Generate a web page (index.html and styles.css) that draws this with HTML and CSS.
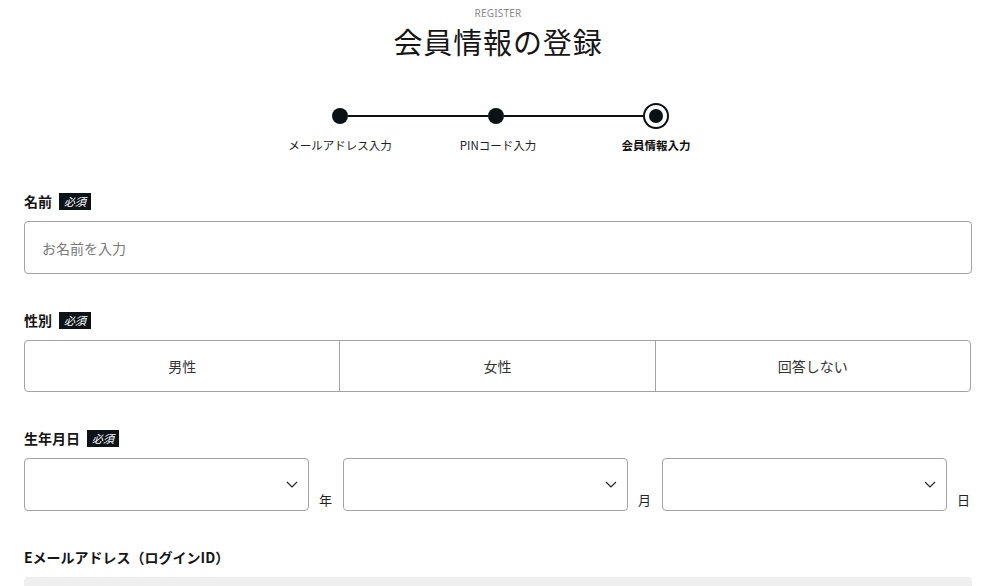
FILE: index.html
```html
<!DOCTYPE html>
<html lang="ja">
  <head>
    <meta charset="UTF-8">
    <meta name="viewport" content="width=device-width, initial-scale=1">
    <title>会員情報の登録</title>
    <link rel="stylesheet" href="styles.css">
  </head>
  <body>
    <main class="page">
      <header class="page-head">
        <p class="eyebrow">REGISTER</p>
        <h1 class="title">会員情報の登録</h1>
      </header>

      <div class="steps">
        <div class="track">
          <span class="dot"></span>
          <span class="line"></span>
          <span class="dot"></span>
          <span class="line"></span>
          <span class="ring"><span class="ring-core"></span></span>
        </div>
        <span class="step-label">メールアドレス入力</span>
        <span class="step-label">PINコード入力</span>
        <span class="step-label current">会員情報入力</span>
      </div>

      <form class="form">
        <div class="field">
          <label class="field-label">名前<span class="badge">必須</span></label>
          <input class="text-input" type="text" placeholder="お名前を入力">
        </div>

        <div class="field">
          <label class="field-label">性別<span class="badge">必須</span></label>
          <div class="segments">
            <span class="segment">男性</span>
            <span class="segment">女性</span>
            <span class="segment">回答しない</span>
          </div>
        </div>

        <div class="field">
          <label class="field-label">生年月日<span class="badge">必須</span></label>
          <div class="birth-row">
            <div class="select">
              <svg class="chevron" width="12" height="7" viewBox="0 0 12 7"><path d="M1 1l5 5 5-5" fill="none" stroke="#222" stroke-width="1.2"/></svg>
            </div>
            <span class="unit">年</span>
            <div class="select">
              <svg class="chevron" width="12" height="7" viewBox="0 0 12 7"><path d="M1 1l5 5 5-5" fill="none" stroke="#222" stroke-width="1.2"/></svg>
            </div>
            <span class="unit">月</span>
            <div class="select">
              <svg class="chevron" width="12" height="7" viewBox="0 0 12 7"><path d="M1 1l5 5 5-5" fill="none" stroke="#222" stroke-width="1.2"/></svg>
            </div>
            <span class="unit">日</span>
          </div>
        </div>

        <div class="field">
          <label class="field-label">Eメールアドレス（ログインID）</label>
          <div class="readonly-input"></div>
        </div>
      </form>
    </main>
  </body>
</html>
```

FILE: styles.css
```css
* {
  box-sizing: border-box;
}

body {
  margin: 0;
  background: #fff;
  color: #161616;
  font-family: "Noto Sans CJK JP", "Noto Sans", sans-serif;
}

.page {
  margin: 0 28px 0 24px;
}

.page-head {
  text-align: center;
  padding-top: 6px;
}

.eyebrow {
  margin: 0;
  font-family: "Noto Sans", sans-serif;
  font-size: 10px;
  line-height: 14px;
  color: #8a8a8a;
  letter-spacing: 0.02em;
}

.title {
  margin: 1px 0 0;
  font-size: 29px;
  line-height: 40px;
  font-weight: 400;
  letter-spacing: 0.03em;
}

.steps {
  display: grid;
  grid-template-columns: repeat(3, 158px);
  justify-content: center;
  margin-top: 42px;
  row-gap: 8px;
}

.track {
  grid-column: 1 / 4;
  display: flex;
  align-items: center;
  height: 26px;
  margin: 0 66px 0 71px;
}

.dot {
  width: 16px;
  height: 16px;
  border-radius: 50%;
  background: #0b1216;
  flex: none;
}

.line {
  flex: 1;
  height: 2px;
  background: #0b1216;
}

.ring {
  width: 26px;
  height: 26px;
  border: 2.5px solid #0b1216;
  border-radius: 50%;
  display: flex;
  align-items: center;
  justify-content: center;
  flex: none;
}

.ring-core {
  width: 14px;
  height: 14px;
  border-radius: 50%;
  background: #0b1216;
}

.step-label {
  text-align: center;
  font-size: 11.5px;
  line-height: 16px;
  color: #222;
}

.step-label.current {
  font-weight: 700;
  color: #111;
}

.form {
  margin-top: 38px;
}

.field {
  margin-bottom: 36px;
}

.field-label {
  display: flex;
  align-items: center;
  font-size: 14px;
  line-height: 20px;
  font-weight: 700;
  margin-bottom: 10px;
}

.badge {
  margin-left: 7px;
  background: #0d1418;
  color: #fff;
  font-size: 11px;
  line-height: 17px;
  padding: 0 5px;
  font-weight: 400;
  font-style: italic;
}

.text-input {
  display: block;
  width: 100%;
  height: 53px;
  border: 1px solid #a3a3a3;
  border-radius: 4px;
  padding: 0 17px;
  font-family: inherit;
  font-size: 14px;
  color: #222;
  outline: none;
}

.text-input::placeholder {
  color: #7a7a7a;
}

.segments {
  display: flex;
  height: 52px;
  border: 1px solid #a3a3a3;
  border-radius: 4px;
  margin-right: 1px;
}

.segment {
  flex: 1;
  display: flex;
  align-items: center;
  justify-content: center;
  font-size: 14px;
  color: #333;
}

.segment + .segment {
  border-left: 1px solid #a3a3a3;
}

.birth-row {
  display: flex;
  align-items: flex-end;
}

.select {
  flex: none;
  width: 285px;
  height: 53px;
  border: 1px solid #a3a3a3;
  border-radius: 4px;
  display: flex;
  align-items: center;
  justify-content: flex-end;
  padding-right: 10px;
}

.unit {
  flex: none;
  font-size: 13px;
  line-height: 13px;
  margin: 0 11px 5px 10px;
  color: #222;
}

.readonly-input {
  height: 53px;
  background: #efefef;
  border-radius: 4px;
}
```
